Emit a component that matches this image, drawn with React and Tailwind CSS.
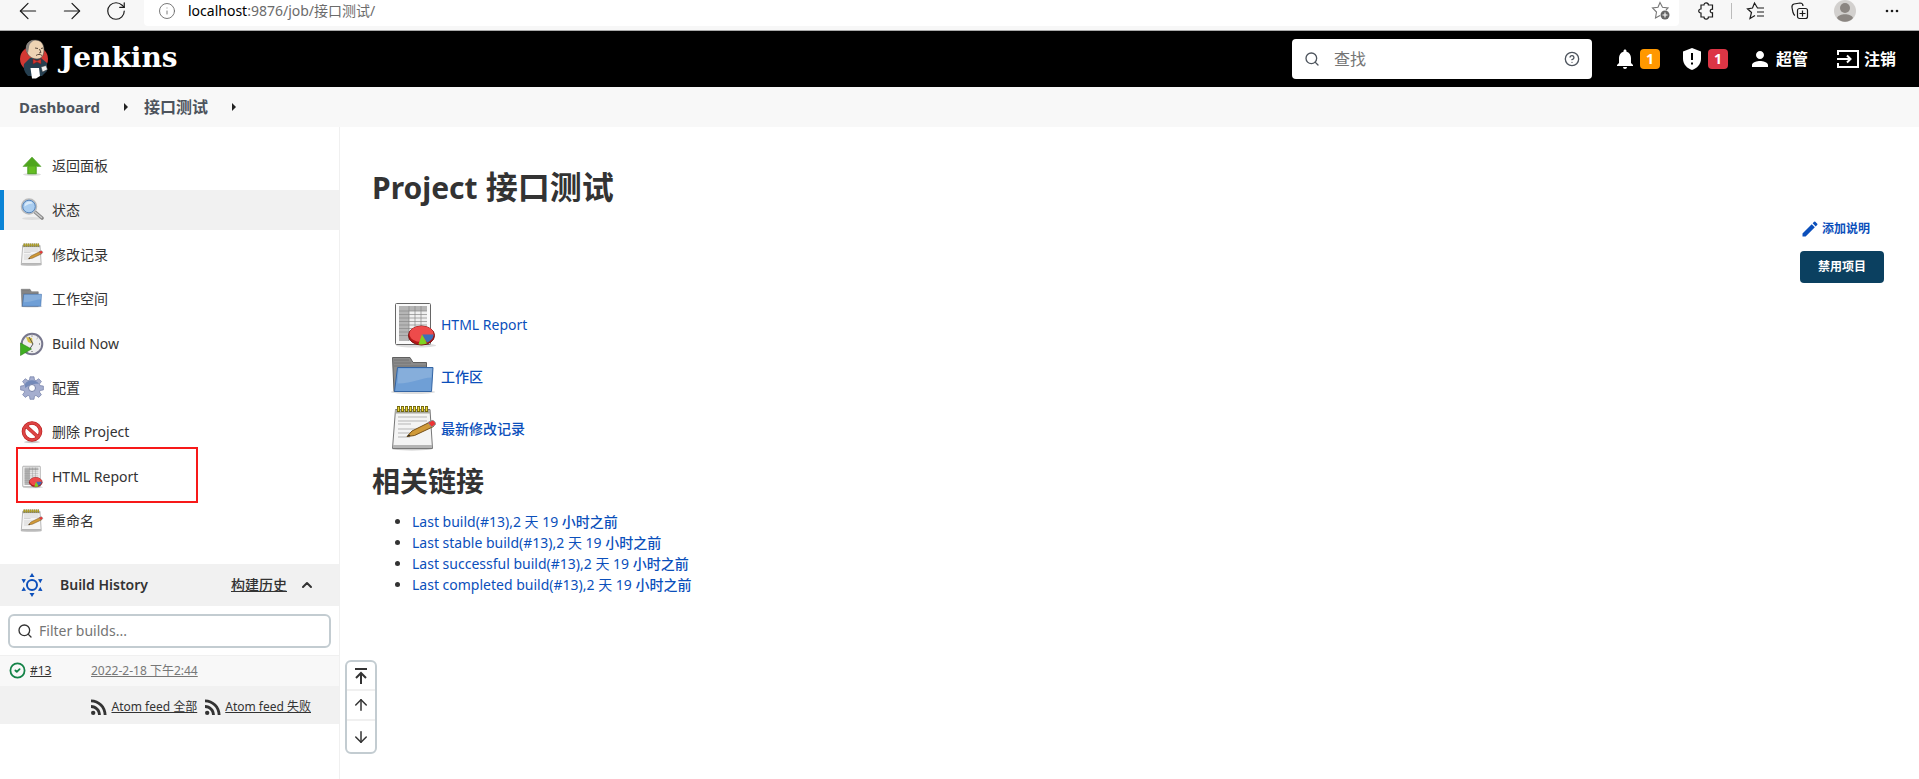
import { ArrowLeft, ArrowRight, RotateCw, Info, Search, CircleHelp, ChevronUp, ArrowUp, ArrowDown, CircleCheck } from 'lucide-react';
import { MdNotifications, MdPerson, MdEdit, MdRssFeed } from 'react-icons/md';

const permalinks = ['Last build', 'Last stable build', 'Last successful build', 'Last completed build'];

function ReportIcon({ className }) {
  return (
    <svg viewBox="0 0 48 48" className={className} aria-hidden="true">
      <ellipse cx="26" cy="44.500" rx="20" ry="2" fill="#ddd" />
      <rect x="5.500" y="2.500" width="35" height="41" rx="1" fill="#fafafa" stroke="#666" />
      <path d="M9 5h28v35H9z" fill="#efefef" />
      <path d="M9 5h28v5H9zM9 10h10v30H9z" fill="#b5b5b5" />
      <path d="M9 10h28M9 13.500h28M9 17h28M9 20.500h28M9 24h28M9 27.500h28M9 31h28M9 34.500h28M19 5v35M25 5v35M31 5v35" stroke="#888" strokeWidth=".7" />
      <ellipse cx="31.500" cy="34.500" rx="13" ry="9.500" fill="#b51818" stroke="#771010" />
      <ellipse cx="31.500" cy="33" rx="12" ry="8" fill="#ee4b4b" />
      <path d="M32 33.500h11.500c0 4-3 6.500-6.500 8z" fill="#3d6fb8" />
      <path d="M32 33.500l5 9c-3 1.200-6 1.200-8.500.8z" fill="#7ed321" />
    </svg>
  );
}

function FolderIcon({ className }) {
  return (
    <svg viewBox="0 2 48 48" className={className} aria-hidden="true">
      <ellipse cx="23" cy="41" rx="22" ry="2" fill="#ddd" />
      <path d="M2.500 6.500h17.500l3 5h13.500v29H4z" fill="#8b8b8b" stroke="#606060" />
      <path d="M4 9h15M4 12h17M4 15h32" stroke="#757575" />
      <path d="M7.500 16.500h35.500l-1.500 24H4.500z" fill="#6f9fd6" stroke="#3465a4" />
      <path d="M8.500 17.500h33.500l-.6 9c-10 0-18 6-33.800 6z" fill="#86aedb" />
    </svg>
  );
}

function NotepadIcon({ className }) {
  return (
    <svg viewBox="0 1 48 48" className={className} aria-hidden="true">
      <ellipse cx="22" cy="45" rx="20" ry="1.500" fill="#ccc" />
      <path d="M5.500 5.500h34.500l2.500 39h-40z" fill="#f4f4f4" stroke="#777" />
      <path d="M3 41h39v3H3z" fill="#b5b5b5" />
      <path d="M5 6h35v3.500H5z" fill="#a8a8a0" />
      <path d="M8.500 2v6M12.500 2v6M16.500 2v6M20.500 2v6M24.500 2v6M28.500 2v6M32.500 2v6M36.500 2v6" stroke="#71660c" strokeWidth="3" />
      <path d="M8.500 3v4M12.500 3v4M16.500 3v4M20.500 3v4M24.500 3v4M28.500 3v4M32.500 3v4M36.500 3v4" stroke="#ecd83b" strokeWidth="1.300" />
      <path d="M8 13h29M8 17h29M8 20h13M8 25h29M8 29h20M8 33h12" stroke="#b5b5b5" />
      <path d="M17 32.500l5-5.500 18-9 3.500 4.500-19 9z" fill="#d19a38" stroke="#765018" />
      <path d="M38 18.500l4-2c2-.5 4.500 3 3 4.500l-3.500 2z" fill="#e33" stroke="#888" />
      <path d="M17 32.500l2-2 1.500 1.500z" fill="#222" />
    </svg>
  );
}

function UpIcon({ className }) {
  return (
    <svg viewBox="0 0 24 24" className={className} aria-hidden="true">
      <ellipse cx="12" cy="20.500" rx="9" ry="1.500" fill="#ddd" />
      <path d="M12 3l9 9.500h-4.500v7.500h-9v-7.500H3z" fill="#4fa51d" stroke="#68ad48" strokeWidth=".7" />
      <path d="M8.500 12.500h7v6.500h-7z" fill="#65bd23" />
    </svg>
  );
}

function LensIcon({ className }) {
  return (
    <svg viewBox="0 0 24 24" className={className} aria-hidden="true">
      <ellipse cx="12" cy="20.500" rx="10" ry="1.500" fill="#ddd" />
      <path d="M15 14l7 6" stroke="#888" strokeWidth="3.600" strokeLinecap="round" />
      <path d="M15.500 14.500l6 5" stroke="#ccc" strokeWidth="1.500" strokeLinecap="round" />
      <circle cx="9" cy="8.500" r="7.500" fill="#a9cdf0" stroke="#bbb" strokeWidth="1.500" />
      <circle cx="9" cy="8.500" r="6.300" fill="none" stroke="#5683b8" />
      <path d="M4.500 8.500c0-3 2-5 5-5 2 0 3 1 3 2-3 0-5 1-8 3z" fill="#d8eafa" />
    </svg>
  );
}

function ClockIcon({ className }) {
  return (
    <svg viewBox="0 0 24 24" className={className} aria-hidden="true">
      <circle cx="12" cy="12" r="10.300" fill="#eee" stroke="#77778d" strokeWidth="2" />
      <path d="M6 5l6 1 1 6-5-2z" fill="#d5bd45" />
      <path d="M9 5l4 7-4 6" fill="none" stroke="#555" />
      <path d="M12 3.500v1M20 12h-1M12 20v-1M17.500 6l-.7.700" stroke="#555" />
      <path d="M.5 11l11 6-11 6.500z" fill="#3fae22" stroke="#2d8216" strokeWidth=".6" />
    </svg>
  );
}

function GearIcon({ className }) {
  return (
    <svg viewBox="0 0 24 24" className={className} aria-hidden="true">
      <path d="M10 .8h4l.5 3.200 1.500.7 2.700-2 2.700 2.800-2 2.600.7 1.500 3.300.5v3.800l-3.300.6-.7 1.500 2 2.700-2.700 2.700-2.700-2-1.500.7-.5 3.200h-4l-.5-3.200-1.500-.7-2.700 2-2.700-2.700 2-2.700-.7-1.500-3.300-.6v-3.800l3.300-.5.7-1.500-2-2.600 2.700-2.800 2.700 2 1.500-.7z" fill="#a5aecf" stroke="#7480a8" strokeWidth=".7" />
      <path d="M5 8c3-5 11-5 14 0-4-1-9 0-14 4z" fill="#7389b8" />
      <circle cx="12" cy="12" r="3.500" fill="#fff" stroke="#7480a8" />
    </svg>
  );
}

function StopIcon({ className }) {
  return (
    <svg viewBox="0 0 24 24" className={className} aria-hidden="true">
      <ellipse cx="12" cy="22" rx="8" ry="1.200" fill="#ccc" />
      <circle cx="12" cy="11.500" r="8.500" fill="#fff" stroke="#b91c1c" strokeWidth="3.600" />
      <path d="M6 6l12 11" stroke="#b91c1c" strokeWidth="3.600" />
      <circle cx="12" cy="11.500" r="8.500" fill="none" stroke="#dc4444" strokeWidth="2.400" />
      <path d="M6 6l12 11" stroke="#dc4444" strokeWidth="2.400" />
    </svg>
  );
}

function Butler() {
  return (
    <svg viewBox="0 0 28 40" className="h-10 w-7" aria-hidden="true">
      <ellipse cx="14" cy="20" rx="14" ry="13" fill="#d33833" />
      <path d="M4 25l6-6h11l6 5v8l-5 5H8c-3-3-5-7-4-12z" fill="#263f50" />
      <path d="M6 10C6 4 10 1 15 1c6 0 9 4 9 10 0 6-3 9-7 9-6 0-10-4-11-10z" fill="#eed3b3" stroke="#444" strokeWidth=".6" />
      <path d="M6 10c0-6 4-9 9-9-4 2-6 4-6 7l-1 6c-1-1-2-2-2-4z" fill="#85807c" />
      <path d="M15 9l3 .5M21 9.500l2-.5M19.500 10l1.500 3.500-2 .5M16 16.500c2-1.500 4-1.500 6 0" fill="none" stroke="#4a3a30" strokeWidth=".9" />
      <path d="M13 20l4 2 4-2v5l-4-2-4 2z" fill="#d33833" stroke="#7d1b1b" strokeWidth=".5" />
      <path d="M10.500 29h8.500l1 8-4 2.500h-4z" fill="#fff" />
      <path d="M21 28l5-1.500 1.500 4-5 2.500z" fill="#eee" stroke="#333" strokeWidth=".5" />
    </svg>
  );
}

const tasks = [
  { label: '返回面板', Icon: UpIcon },
  { label: '状态', Icon: LensIcon, active: true },
  { label: '修改记录', Icon: NotepadIcon },
  { label: '工作空间', Icon: FolderIcon },
  { label: 'Build Now', Icon: ClockIcon },
  { label: '配置', Icon: GearIcon },
  { label: '删除 Project', Icon: StopIcon },
  { label: 'HTML Report', Icon: ReportIcon, marked: true },
  { label: '重命名', Icon: NotepadIcon },
];

const shortcuts = [
  { label: 'HTML Report', Icon: ReportIcon, weight: 'font-normal' },
  { label: '工作区', Icon: FolderIcon, weight: 'font-medium' },
  { label: '最新修改记录', Icon: NotepadIcon, weight: 'font-medium' },
];

function BrowserBar() {
  return (
    <div className="flex h-[31px] items-start border-b border-[#a9a9a9] bg-[#f7f7f7] text-[#1b1b1b]">
      <div className="flex h-[22px] w-36 shrink-0 items-center gap-[18px] pl-[15px]">
        <button aria-label="Back"><ArrowLeft size={26} strokeWidth={1.1} /></button>
        <button aria-label="Forward"><ArrowRight size={26} strokeWidth={1.1} /></button>
        <button aria-label="Reload" className="ml-0.5"><RotateCw size={22} strokeWidth={1.3} /></button>
      </div>
      <div className="flex h-[26px] flex-1 items-center rounded-b bg-white pr-2 pl-3.5 text-[#6b6b6b]">
        <Info size={18} strokeWidth={1.2} className="mb-1" />
        <span className="mb-1 ml-3 flex-1 text-sm leading-5"><span className="text-black">localhost</span>:9876/job/接口测试/</span>
        <svg viewBox="0 0 20 20" className="mb-1 size-5" fill="none" stroke="#777" strokeWidth="1.100">
          <path d="M9 14.500l-4.500 2.500 1-6-4-4 5.500-.8L9 1.500l2.500 4.700 5.500.8-2 2" />
          <circle cx="14" cy="14" r="4.500" fill="#666" stroke="none" />
          <path d="M14 11.500v5M11.500 14h5" stroke="#fff" />
        </svg>
      </div>
      <div className="flex h-[22px] w-60 shrink-0 items-center pl-[19px]">
        <button aria-label="Extensions">
          <svg viewBox="0 0 18 20" className="h-5 w-[18px]" fill="none" stroke="currentColor" strokeWidth="1.200">
            <path d="M6 4a2.200 2.200 0 0 1 4.400 0h4.100v4.200c-3-.4-3 4 0 3.600V16h-4.100a2.200 2.200 0 0 1-4.400 0H3v-4c-3 0-3-4 0-4V4z" />
          </svg>
        </button>
        <span className="mr-3.5 ml-[15px] h-4 w-px bg-[#bbb]" />
        <button aria-label="Favorites">
          <svg viewBox="0 0 20 20" className="size-5" fill="none" stroke="currentColor" strokeWidth="1.200">
            <path d="M18 7h-6.500L8.500 2 6.500 7l-5 .8L5.500 11.500 4 17.500l5-3M11 11h7M11 15h7" />
          </svg>
        </button>
        <button aria-label="Collections" className="ml-6">
          <svg viewBox="0 0 20 20" className="size-5" fill="none" stroke="currentColor" strokeWidth="1.200">
            <rect x="7.500" y="7.500" width="10" height="10" rx="2" />
            <path d="M12.500 9.500v6M9.500 12.500h6M5 14.500c-1-.5-1.500-1.500-2-3l-1-5c-.3-2 0-3 2-3.500l6-1c2 0 3 1 3 3" />
          </svg>
        </button>
        <button aria-label="Profile" className="ml-6">
          <svg viewBox="0 0 22 22" className="size-[22px]">
            <circle cx="11" cy="11" r="11" fill="#d2d0ce" />
            <circle cx="11" cy="8" r="5" fill="#8b8682" />
            <path d="M3 18c2-5 14-5 16 0-4 5-12 5-16 0z" fill="#8b8682" />
          </svg>
        </button>
        <button aria-label="More" className="ml-[29px]">
          <svg viewBox="0 0 14 20" className="h-5 w-3.5" fill="currentColor"><circle cx="2" cy="10" r="1.300" /><circle cx="7" cy="10" r="1.300" /><circle cx="12" cy="10" r="1.300" /></svg>
        </button>
      </div>
    </div>
  );
}

function Header() {
  return (
    <header className="flex h-14 items-center bg-black pr-[23px] pl-5 text-white">
      <a href="#" className="flex items-center gap-3">
        <Butler />
        <span className="pb-0.5 font-['DejaVu_Serif',serif] text-[28px] leading-9 font-bold">Jenkins</span>
      </a>
      <label className="ml-auto flex h-10 w-[300px] items-center rounded bg-white px-3 text-[#4d545d]">
        <Search size={16} strokeWidth={2} />
        <input type="text" aria-label="查找" placeholder="查找" className="ml-3.5 w-0 flex-1 text-base outline-none placeholder:text-[#757575]" />
        <CircleHelp size={16} strokeWidth={2} />
      </label>
      <a href="#" aria-label="通知" className="ml-[21px] flex items-center gap-[3px]">
        <MdNotifications size={24} />
        <span className="flex h-5 w-5 items-center justify-center rounded bg-[#ff9800] text-sm font-bold">1</span>
      </a>
      <a href="#" aria-label="安全警告" className="ml-5 flex items-center gap-1">
        <svg viewBox="0 0 24 24" className="size-6">
          <path d="M12 1l9 3.500V12c0 5-4 9.500-9 11-5-1.500-9-6-9-11V4.500z" fill="#fff" />
          <path d="M12 6v7M12 15.500v2" stroke="#000" strokeWidth="2" />
        </svg>
        <span className="flex h-5 w-5 items-center justify-center rounded bg-[#dc3545] text-sm font-bold">1</span>
      </a>
      <a href="#" className="ml-5 flex items-center gap-1 text-base font-bold"><MdPerson size={24} />超管</a>
      <a href="#" className="ml-7 flex items-center gap-1 text-base font-bold">
        <svg viewBox="0 0 24 20" className="h-5 w-6" fill="none" stroke="#fff" strokeWidth="2">
          <path d="M2 6V2h20v16H2v-4M1 10h13M11 6.500l3.500 3.500-3.500 3.500" />
        </svg>
        注销
      </a>
    </header>
  );
}

function Breadcrumbs() {
  return (
    <nav className="flex h-10 items-center bg-[#f8f8f8] pl-[19px] text-base font-semibold text-[#4d545d]">
      <a href="#" className="text-[15px] font-bold">Dashboard</a>
      <svg viewBox="0 0 4 8" className="mr-4 ml-6 h-2 w-1" fill="#222"><path d="M0 0l4 4-4 4z" /></svg>
      <a href="#">接口测试</a>
      <svg viewBox="0 0 4 8" className="mr-4 ml-6 h-2 w-1" fill="#222"><path d="M0 0l4 4-4 4z" /></svg>
    </nav>
  );
}

function SidePanel() {
  return (
    <aside className="w-[340px] shrink-0 border-r border-[#f0f0f0] pt-[19px]">
      <ul className="flex h-[395px] flex-col justify-between">
        {tasks.map(({ label, Icon, active, marked }) => (
          <li key={label} className="relative">
            <a href="#" className={active ? 'flex h-10 items-center gap-2 border-l-4 border-[#0b84d6] bg-[#f1f1f1] pl-4' : 'flex h-10 items-center gap-2 pl-5'}>
              <Icon className="size-6" />
              {label}
            </a>
            {marked && <div className="absolute -top-2.5 left-4 h-[56px] w-[182px] border-2 border-[#f71919]" />}
          </li>
        ))}
      </ul>

      <div className="mt-[23px] flex h-[42px] items-center bg-[#f1f1f1] pr-6 pl-5">
        <svg viewBox="0 0 24 24" className="size-6" fill="#0b4fbb">
          <circle cx="12" cy="12" r="5" fill="none" stroke="#0b4fbb" strokeWidth="2" />
          <path d="M12 0l2.500 4h-5zM12 24l2.500-4h-5zM1.500 6l4.500.2-2.300 4zM22.500 6l-4.500.2 2.300 4zM1.500 18l4.500-.2-2.300-4zM22.500 18l-4.500-.2 2.300-4z" />
        </svg>
        <h2 className="ml-4 flex-1 font-semibold">Build History</h2>
        <a href="#" className="font-medium underline">构建历史</a>
        <button aria-label="收起" className="ml-3"><ChevronUp size={16} strokeWidth={3} /></button>
      </div>

      <label className="mx-2 mt-2 flex h-[34px] items-center gap-1.5 rounded-md border-2 border-[#c3ccd1] px-[7px]">
        <Search size={16} strokeWidth={2} />
        <input type="text" aria-label="Filter builds" placeholder="Filter builds..." className="w-0 flex-1 outline-none placeholder:text-[#757575]" />
      </label>

      <table className="mt-[7px] w-full text-xs">
        <tbody>
          <tr className="h-[30px] border-t border-[#f0f0f0] bg-[#f8f8f8]">
            <td className="w-[91px] pl-[9px]">
              <a href="#" className="flex items-center gap-1 underline"><CircleCheck size={17} strokeWidth={2.5} className="text-[#138347]" />#13</a>
            </td>
            <td><a href="#" className="text-[#777] underline">2022-2-18 下午2:44</a></td>
          </tr>
        </tbody>
      </table>
      <div className="flex h-[38px] items-center justify-end gap-1 bg-[#f1f1f1] pt-1 pr-7 text-xs">
        <a href="#" className="flex items-center underline"><MdRssFeed size={24} />Atom feed 全部</a>
        <a href="#" className="flex items-center underline"><MdRssFeed size={24} />Atom feed 失败</a>
      </div>
    </aside>
  );
}

function Main() {
  return (
    <main className="relative flex-1 pt-10 pr-[35px] pl-8">
      <h1 className="text-[32px] leading-10 font-bold"><span className="text-3xl">Project</span> 接口测试</h1>
      <div className="flex flex-col items-end gap-3 pt-3 text-xs font-bold">
        <a href="#" className="mr-3.5 flex h-5 items-center gap-0.5 text-[#0b4fbb]"><MdEdit size={20} />添加说明</a>
        <button className="h-8 rounded bg-[#0b4060] px-[18px] text-white">禁用项目</button>
      </div>
      <ul className="mt-4 pl-[18px]">
        {shortcuts.map(({ label, Icon, weight }) => (
          <li key={label} className="flex h-[52px] items-center gap-[3px] text-[#0b4fbb]">
            <Icon className="size-12" />
            <a href="#" className={weight}>{label}</a>
          </li>
        ))}
      </ul>
      <h2 className="mt-1.5 text-[28px] leading-10 font-bold">相关链接</h2>
      <ul className="mt-2.5 list-disc pl-10 leading-[21px]">
        {permalinks.map((name) => (
          <li key={name}><a href="#" className="text-[#0b4fbb]">{name}(#13),2 天 19 <span className="font-medium">小时之前</span></a></li>
        ))}
      </ul>
      <div className="absolute top-[533px] left-[5px] flex w-8 flex-col divide-y-2 divide-[#f0f0f0] rounded-md border-2 border-[#c3ccd1] bg-white">
        <button aria-label="Top" className="flex h-[29px] items-center justify-center">
          <svg viewBox="0 0 14 18" className="h-[18px] w-3.5" fill="none" stroke="currentColor" strokeWidth="2"><path d="M1 2h12M7 17V6M2 11l5-5 5 5" /></svg>
        </button>
        <button aria-label="Up" className="flex h-[30px] items-center justify-center"><ArrowUp size={18} /></button>
        <button aria-label="Down" className="flex h-[31px] items-center justify-center"><ArrowDown size={18} /></button>
      </div>
    </main>
  );
}

export default function App() {
  return (
    <div className="flex min-h-screen flex-col bg-white font-['Noto_Sans','Noto_Sans_CJK_SC',sans-serif] text-sm text-[#333]">
      <BrowserBar />
      <Header />
      <Breadcrumbs />
      <div className="flex flex-1">
        <SidePanel />
        <Main />
      </div>
    </div>
  );
}
